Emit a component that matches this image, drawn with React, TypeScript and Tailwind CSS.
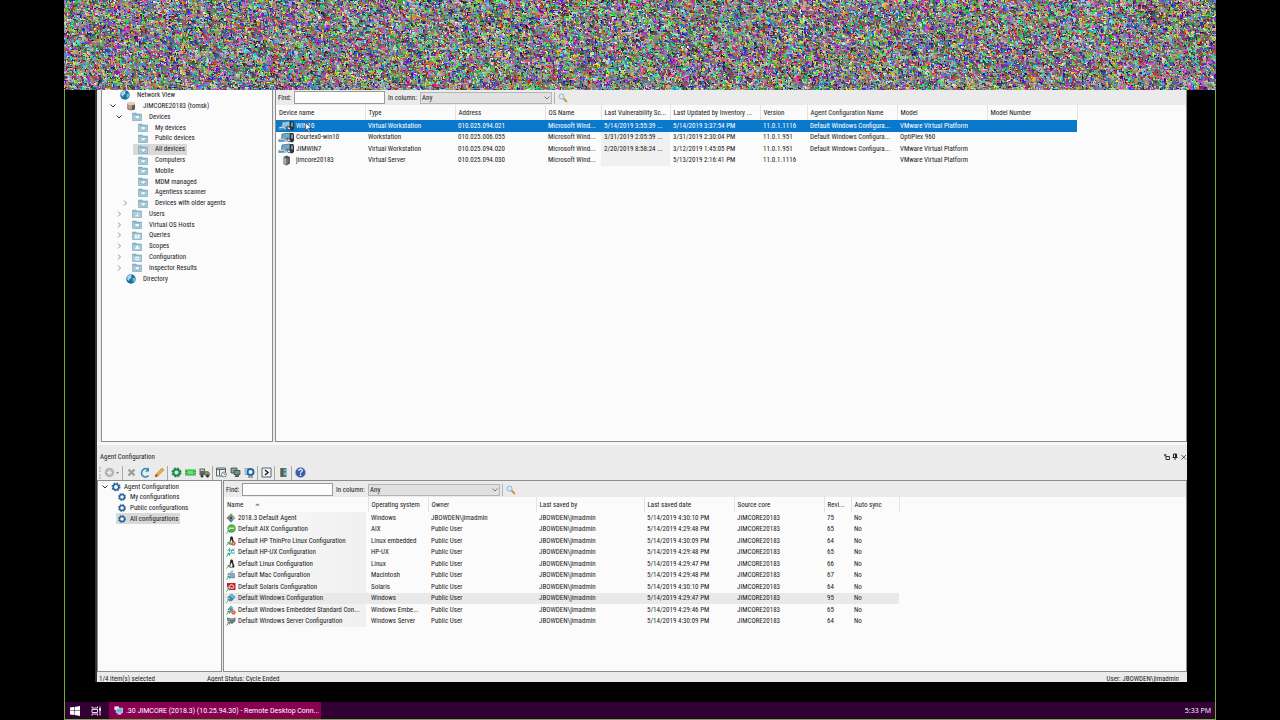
import { useEffect, useRef } from "react";
import type { ReactNode } from "react";

type TreeItem = {
  label: string;
  level: number;
  icon: ReactNode;
  chevron?: "open" | "closed";
  selected?: boolean;
};

function Noise() {
  const ref = useRef<HTMLCanvasElement>(null);
  useEffect(() => {
    const canvas = ref.current;
    const ctx = canvas?.getContext("2d");
    if (!canvas || !ctx) return;
    const image = ctx.createImageData(canvas.width, canvas.height);
    const data = image.data;
    const stride = canvas.width * 4;
    let seed = 90210;
    const next = () => {
      seed = (Math.imul(seed, 1664525) + 1013904223) >>> 0;
      return (seed >>> 8) / 16777216;
    };
    for (let i = 0; i < data.length; i += 4) {
      const pick = next();
      const source = pick < 0.36 && i >= 4 ? i - 4 : pick < 0.66 && i >= stride ? i - stride : -1;
      for (let c = 0; c < 3; c += 1) {
        data[i + c] = source >= 0 ? data[source + c] * 0.85 + next() * 38 : next() * 255;
      }
      data[i + 3] = 255;
    }
    ctx.putImageData(image, 0, 0);
  }, []);
  return <canvas ref={ref} width={1152} height={90} aria-hidden="true" className="block h-[90px] w-full shrink-0" />;
}

function Folder({ mark = "screen" }: { mark?: "screen" | "user" | "grid" | "scope" | "gear" }) {
  return (
    <svg viewBox="0 0 20 18" className="h-[9px] w-[10px] shrink-0">
      <path d="M1 2h7l2 2h9v13H1z" fill="#8fb9c9" stroke="#6f9aac" strokeWidth="1" />
      <path d="M2 6h16v10H2z" fill="#a9cddb" />
      {mark === "screen" && <path d="M6 7h9v6h-3v2H9v-2H6z" fill="#e9f6fb" stroke="#6aa0b8" />}
      {mark === "user" && <path d="M10 6.500a2.200 2.200 0 1 1 0 4.400M6.500 15c0-5 7-5 7 0z" fill="#e9f6fb" />}
      {mark === "grid" && <path d="M6 7h3.500v8H6zM11 7h4v8h-4z" fill="#f4fbff" />}
      {mark === "scope" && <path d="M10.500 6l5 8h-10z" fill="#f4fbff" />}
      {mark === "gear" && <circle cx="10.500" cy="11" r="3" fill="none" stroke="#f4fbff" strokeWidth="2.200" />}
    </svg>
  );
}

function Globe() {
  return (
    <svg viewBox="0 0 20 20" className="h-[10px] w-[10px] shrink-0">
      <circle cx="10" cy="10" r="9.500" fill="#1d6f9f" />
      <path d="M3 5c3-4 7-4 9-3l-2 3 1 3-4 2-1 4-4-4z" fill="#a8d9e6" />
      <path d="M13 8l5-1 1 4-4 6-2-4z" fill="#6db7d0" />
    </svg>
  );
}

function Database() {
  return (
    <svg viewBox="0 0 20 20" className="h-[10px] w-[10px] shrink-0">
      <path d="M2 5v10c0 5 16 5 16 0V5z" fill="#a58c7a" />
      <path d="M12 8h6v7c0 2-3 3-6 3z" fill="#6d5546" />
      <ellipse cx="10" cy="5" rx="8" ry="3.500" fill="#dccfc4" />
      <path d="M2 10c2 3 8 3 10 2" fill="none" stroke="#e3d9d0" />
    </svg>
  );
}

function BlueGear() {
  return (
    <svg viewBox="0 0 20 20" className="h-[10px] w-[10px] shrink-0">
      <circle cx="10" cy="10" r="7.500" fill="none" stroke="#2b659a" strokeWidth="3" strokeDasharray="3.200 2.690" />
      <circle cx="10" cy="10" r="5.500" fill="#f5fafc" stroke="#2b659a" strokeWidth="3.200" />
    </svg>
  );
}

function SmallGear() {
  return (
    <svg viewBox="0 0 24 24" className="h-[10px] w-[10px] shrink-0">
      <circle cx="12" cy="12" r="8" fill="none" stroke="#2b659a" strokeWidth="3" strokeDasharray="3.200 3.080" />
      <circle cx="12" cy="12" r="6" fill="#f5fafc" stroke="#2b659a" strokeWidth="3.600" />
    </svg>
  );
}

function Chevron({ kind }: { kind?: "open" | "closed" }) {
  return (
    <svg viewBox="0 0 12 12" className="h-[6px] w-[6px] shrink-0" aria-hidden="true">
      {kind === "open" && <path d="M1 3l5 5 5-5" fill="none" stroke="#333" strokeWidth="2" />}
      {kind === "closed" && <path d="M4 1l5 5-5 5" fill="none" stroke="#888" strokeWidth="1.800" />}
    </svg>
  );
}

const deviceTree: TreeItem[] = [
  { label: "Network View", level: 0, icon: <Globe /> },
  { label: "JIMCORE20183 (tomsk)", level: 1, icon: <Database />, chevron: "open" },
  { label: "Devices", level: 2, icon: <Folder />, chevron: "open" },
  { label: "My devices", level: 3, icon: <Folder /> },
  { label: "Public devices", level: 3, icon: <Folder /> },
  { label: "All devices", level: 3, icon: <Folder />, selected: true },
  { label: "Computers", level: 3, icon: <Folder /> },
  { label: "Mobile", level: 3, icon: <Folder /> },
  { label: "MDM managed", level: 3, icon: <Folder /> },
  { label: "Agentless scanner", level: 3, icon: <Folder /> },
  { label: "Devices with older agents", level: 3, icon: <Folder />, chevron: "closed" },
  { label: "Users", level: 2, icon: <Folder mark="user" />, chevron: "closed" },
  { label: "Virtual OS Hosts", level: 2, icon: <Folder />, chevron: "closed" },
  { label: "Queries", level: 2, icon: <Folder mark="grid" />, chevron: "closed" },
  { label: "Scopes", level: 2, icon: <Folder mark="scope" />, chevron: "closed" },
  { label: "Configuration", level: 2, icon: <Folder mark="gear" />, chevron: "closed" },
  { label: "Inspector Results", level: 2, icon: <Folder />, chevron: "closed" },
  { label: "Directory", level: 1, icon: <Globe /> },
];

const configTree: TreeItem[] = [
  { label: "Agent Configuration", level: 0, icon: <BlueGear />, chevron: "open" },
  { label: "My configurations", level: 1, icon: <SmallGear /> },
  { label: "Public configurations", level: 1, icon: <SmallGear /> },
  { label: "All configurations", level: 1, icon: <SmallGear />, selected: true },
];

const indents = ["pl-[2px]", "pl-[8px]", "pl-[14px]", "pl-[20px]"];

function Tree({ items, compact, className }: { items: TreeItem[]; compact?: boolean; className: string }) {
  return (
    <ul className={`grid auto-rows-fr ${className}`}>
      {items.map((item) => (
        <li key={item.label} className={`flex min-h-0 items-center ${compact ? "gap-[2px]" : "gap-[5px]"} ${indents[item.level]}`}>
          <Chevron kind={item.chevron} />
          <button
            type="button"
            className={`flex h-full min-h-0 items-center whitespace-nowrap pr-[2px] ${
              compact ? "gap-[3px] pl-px" : "gap-[7px] pl-[5px]"
            } ${item.selected ? "bg-[#d9d9d9]" : ""}`}
          >
            {item.icon}
            {item.label}
          </button>
        </li>
      ))}
    </ul>
  );
}

function Magnifier() {
  return (
    <svg viewBox="0 0 20 20" className="h-[10px] w-[10px]">
      <path d="M11 11l7 7" stroke="#c99a3c" strokeWidth="4" />
      <circle cx="7" cy="7" r="5" fill="#d8edf7" stroke="#8fb4c8" strokeWidth="2" />
    </svg>
  );
}

function FindBar({ id }: { id: string }) {
  return (
    <div className="flex h-[15px] shrink-0 items-center bg-[#ebebeb] pl-[2px]">
      <label htmlFor={`${id}-find`} className="w-[16px] whitespace-nowrap">
        Find:
      </label>
      <input id={`${id}-find`} className="h-[13px] w-[91px] border border-[#9a9a9a] bg-[#fdfdfd] px-1 outline-none" />
      <label htmlFor={`${id}-column`} className="ml-[3px] w-[32px] whitespace-nowrap">
        In column:
      </label>
      <div className="relative">
        <select
          id={`${id}-column`}
          className="block h-[12px] w-[132px] appearance-none border border-[#b4b4b4] bg-[#e1e1e1] pl-px outline-none"
        >
          <option>Any</option>
        </select>
        <svg viewBox="0 0 12 12" className="pointer-events-none absolute top-[3px] right-[2px] h-[6px] w-[6px]">
          <path d="M1 3l5 5 5-5" fill="none" stroke="#555" strokeWidth="1.600" />
        </svg>
      </div>
      <span className="mx-[2px] h-[12px] w-px bg-[#b0b0b0]" />
      <button type="button" aria-label="Search" className="ml-px">
        <Magnifier />
      </button>
    </div>
  );
}

function Pc({ tone = "dark" }: { tone?: "dark" | "light" }) {
  return (
    <svg viewBox="0 0 34 22" className="h-[11px] w-[17px] shrink-0">
      <path d="M8 4l15-2 1 11-17 3z" fill={tone === "light" ? "#8cc4e4" : "#6fa9c6"} stroke="#3f6a82" strokeWidth="1.500" />
      <path d="M1 14l13-1 3 6-16 1z" fill="#5f93ad" />
      <path d="M3 15l9-1 3 4" stroke="#d3e8f1" strokeWidth="2" fill="none" />
      <path d="M24 2h6l2 3v13l-4 3-5-2z" fill="#2c3439" />
      <path d="M28 5v8" stroke="#e5eef2" strokeWidth="2" />
      <path d="M19 12l6 5-2 3-5-3z" fill="#f2f2f2" stroke="#333" strokeWidth="1.500" />
    </svg>
  );
}

function Server() {
  return (
    <svg viewBox="0 0 34 22" className="h-[11px] w-[17px] shrink-0">
      <path d="M11 4l6-3 7 3v13l-7 4-6-3z" fill="#4b575d" />
      <path d="M12 5l5 2v13l-5-3z" fill="#9cabb1" />
      <path d="M19 8v9M22 7v9" stroke="#8d9aa0" />
    </svg>
  );
}

function Cursor() {
  return (
    <svg viewBox="0 0 12 18" className="absolute top-[2px] left-[27px] h-[11px] w-[7px]">
      <path d="M1 1v13l3-3 3 6 2-1-3-6h5z" fill="#fff" stroke="#222" />
    </svg>
  );
}

const deviceHeads = [
  "Device name",
  "Type",
  "Address",
  "OS Name",
  "Last Vulnerability Sc...",
  "Last Updated by Inventory ...",
  "Version",
  "Agent Configuration Name",
  "Model",
  "Model Number",
];

const devices = [
  ["WIN10", "Virtual Workstation", "010.025.094.021", "Microsoft Wind...", "5/14/2019 3:55:39 ...", "5/14/2019 3:37:54 PM", "11.0.1.1116", "Default Windows Configura...", "VMware Virtual Platform", ""],
  ["Courtex0-win10", "Workstation", "010.025.006.055", "Microsoft Wind...", "3/31/2019 2:05:59 ...", "3/31/2019 2:30:04 PM", "11.0.1.951", "Default Windows Configura...", "OptiPlex 960", ""],
  ["JIMWIN7", "Virtual Workstation", "010.025.094.020", "Microsoft Wind...", "2/20/2019 8:58:24 ...", "3/12/2019 1:45:05 PM", "11.0.1.951", "Default Windows Configura...", "VMware Virtual Platform", ""],
  ["jimcore20183", "Virtual Server", "010.025.094.030", "Microsoft Wind...", "", "5/13/2019 2:16:41 PM", "11.0.1.1116", "", "VMware Virtual Platform", ""],
];

function DeviceTable() {
  return (
    <table className="h-[61px] w-[801px] table-fixed border-collapse text-left">
      <colgroup>
        <col className="w-[89px]" />
        <col className="w-[90px]" />
        <col className="w-[90px]" />
        <col className="w-[56px]" />
        <col className="w-[69px]" />
        <col className="w-[90px]" />
        <col className="w-[47px]" />
        <col className="w-[90px]" />
        <col className="w-[90px]" />
        <col className="w-[90px]" />
      </colgroup>
      <thead>
        <tr className="h-[15px]">
          {deviceHeads.map((head) => (
            <th key={head} className="border-r border-[#e3e3e3] pl-[3px] font-normal whitespace-nowrap">
              {head}
            </th>
          ))}
        </tr>
      </thead>
      <tbody>
        {devices.map((row, r) => (
          <tr key={row[0]} className={r === 0 ? "bg-[#0a79cc] text-white" : ""}>
            {row.map((cell, c) => (
              <td key={c} className={`whitespace-nowrap ${c === 0 ? "pl-[2px]" : "pl-[3px]"} ${c === 4 && r > 0 ? "bg-[#f0f0f0]" : ""}`}>
                {c === 0 ? (
                  <span className="relative flex items-center gap-px">
                    {r === 3 ? <Server /> : <Pc tone={r === 0 ? "light" : "dark"} />}
                    {cell}
                    {r === 0 && <Cursor />}
                  </span>
                ) : (
                  cell
                )}
              </td>
            ))}
          </tr>
        ))}
      </tbody>
    </table>
  );
}

function ConfigIcon({ kind }: { kind: string }) {
  return (
    <svg viewBox="0 0 20 20" className="h-[10px] w-[10px] shrink-0">
      {kind === "agent" && (
        <>
          <path d="M10 1l9 9-9 9-9-9z" fill="#8fa9a7" />
          <path d="M10 1l5 6H5z" fill="#4fae6c" />
          <path d="M1 10l6-5v10z" fill="#c7626c" />
          <path d="M10 19l5-6H5z" fill="#4a7bb0" />
          <circle cx="10" cy="10" r="2.500" fill="#2d4f55" />
        </>
      )}
      {kind === "aix" && (
        <>
          <circle cx="11" cy="9" r="8.500" fill="#58ad45" />
          <path d="M6 7h10v3H6z" fill="#c8ecbc" />
        </>
      )}
      {(kind === "linux" || kind === "thinpro") && (
        <>
          <path d="M11 1c4 0 3 5 4 8s3 6 1 8H6c-2-2 1-6 2-9s-1-7 3-7z" fill="#26292b" />
          <path d="M11 7c2 3 3 7 1 9H9c-1-3 0-6 2-9z" fill="#f2f2f2" />
        </>
      )}
      {kind === "hpux" && <path d="M3 8l4-5v7m0-4h4v5M12 8l5-5M12 3l5 6M4 12h14" stroke="#42afb4" strokeWidth="2" fill="none" />}
      {kind === "mac" && (
        <>
          <path d="M4 7h13v9H4z" fill="#8aa9bf" stroke="#577791" />
          <path d="M8 6c0-4 4-5 7-5l-1 4z" fill="#9fb8c9" />
        </>
      )}
      {kind === "solaris" && (
        <>
          <path d="M2 2h17v14H2z" fill="#c91f2b" />
          <path d="M6 10c1-6 9-6 10 0M6 12h10" stroke="#fff" strokeWidth="1.800" fill="none" />
        </>
      )}
      {kind === "windows" && (
        <>
          <path d="M11 1l8 7-8 9-9-7z" fill="#3d85ab" />
          <path d="M11 2l7 6-4 3-7-5z" fill="#79b5cf" />
        </>
      )}
      {kind === "embedded" && (
        <>
          <path d="M10 1l5 8-7 7-5-7z" fill="#5c97a8" />
          <path d="M7 5l5-3 3 5z" fill="#7cc47c" />
        </>
      )}
      {kind === "server" && (
        <>
          <path d="M2 3l10 2 7-2v7l-7 6-9-5z" fill="#6d7579" />
          <path d="M5 6l6 2 6-2" stroke="#c9d2d5" fill="none" />
        </>
      )}
      {(kind === "thinpro" || kind === "embedded") && <circle cx="15" cy="15" r="3.500" fill="#d9a25a" stroke="#d8442d" strokeWidth="2" />}
      {kind !== "agent" && (
        <>
          <path d="M0 11h8v9H0z" fill="#f3fff5" />
          <path d="M1 19l5-6M3 13h4v4" stroke="#2d8b57" strokeWidth="1.800" fill="none" />
        </>
      )}
    </svg>
  );
}

const configHeads = ["Name", "Operating system", "Owner", "Last saved by", "Last saved date", "Source core", "Revi...", "Auto sync"];

const configs = [
  ["agent", "2018.3 Default Agent", "Windows", "JBOWDEN\\jimadmin", "5/14/2019 4:30:10 PM", "75"],
  ["aix", "Default AIX Configuration", "AIX", "Public User", "5/14/2019 4:29:48 PM", "65"],
  ["thinpro", "Default HP ThinPro Linux Configuration", "Linux embedded", "Public User", "5/14/2019 4:30:09 PM", "64"],
  ["hpux", "Default HP-UX Configuration", "HP-UX", "Public User", "5/14/2019 4:29:48 PM", "65"],
  ["linux", "Default Linux Configuration", "Linux", "Public User", "5/14/2019 4:29:47 PM", "66"],
  ["mac", "Default Mac Configuration", "Macintosh", "Public User", "5/14/2019 4:29:48 PM", "67"],
  ["solaris", "Default Solaris Configuration", "Solaris", "Public User", "5/14/2019 4:30:10 PM", "64"],
  ["windows", "Default Windows Configuration", "Windows", "Public User", "5/14/2019 4:29:47 PM", "95"],
  ["embedded", "Default Windows Embedded Standard Con...", "Windows Embe...", "Public User", "5/14/2019 4:29:46 PM", "65"],
  ["server", "Default Windows Server Configuration", "Windows Server", "Public User", "5/14/2019 4:30:09 PM", "64"],
];

function ConfigTable() {
  return (
    <table className="h-[130px] w-[675px] table-fixed border-collapse text-left">
      <colgroup>
        <col className="w-[144px]" />
        <col className="w-[60px]" />
        <col className="w-[108px]" />
        <col className="w-[108px]" />
        <col className="w-[90px]" />
        <col className="w-[90px]" />
        <col className="w-[27px]" />
        <col className="w-[48px]" />
      </colgroup>
      <thead>
        <tr className="h-[15px]">
          {configHeads.map((head, i) => (
            <th key={head} className="border-r border-[#e3e3e3] pl-[3px] font-normal whitespace-nowrap">
              {head}
              {i === 0 && (
                <svg viewBox="0 0 10 6" className="ml-[12px] inline h-[3px] w-[5px]">
                  <path d="M0 5l5-4 5 4z" fill="#777" />
                </svg>
              )}
            </th>
          ))}
        </tr>
      </thead>
      <tbody>
        {configs.map(([kind, name, os, owner, date, revision]) => (
          <tr key={name} className={kind === "windows" ? "bg-[#e9e9e9]" : ""}>
            <td className="h-px py-0 pl-[2px] whitespace-nowrap">
              <span className="flex h-full items-center gap-[2px]">
                <ConfigIcon kind={kind} />
                <span
                  className={`mr-[2px] flex h-full flex-1 items-center ${
                    kind === "windows" ? "" : "bg-linear-to-r from-[#fafafa] to-[#f0f0f0]"
                  }`}
                >
                  {name}
                </span>
              </span>
            </td>
            {[os, owner, "JBOWDEN\\jimadmin", date, "JIMCORE20183", revision, "No"].map((cell, i) => (
              <td key={i} className="pl-[3px] whitespace-nowrap">
                {cell}
              </td>
            ))}
          </tr>
        ))}
      </tbody>
    </table>
  );
}

function Tool({ label, children }: { label: string; children: ReactNode }) {
  return (
    <button type="button" aria-label={label} className="flex h-[14px] w-[14px] items-center justify-center">
      <svg viewBox="0 0 22 22" className="h-[11px] w-[11px]">
        {children}
      </svg>
    </button>
  );
}

function Divider() {
  return <span className="mx-px h-[14px] w-px bg-[#a8a8a8]" />;
}

function Toolbar() {
  return (
    <div className="flex h-[15px] shrink-0 items-center">
      <span className="mr-px ml-[2px] h-[12px] border-l-2 border-dotted border-[#c4c4c4]" />
      <Tool label="New">
        <circle cx="11" cy="11" r="9.500" fill="#b5b5b5" />
        <path d="M11 6v10M6 11h10" stroke="#ededed" strokeWidth="3" />
      </Tool>
      <svg viewBox="0 0 8 5" className="mr-[2px] h-[2px] w-[3px]">
        <path d="M0 0h8l-4 5z" fill="#888" />
      </svg>
      <Divider />
      <Tool label="Delete">
        <path d="M5 5l12 12M17 5L5 17" stroke="#9a9a9a" strokeWidth="4.500" />
      </Tool>
      <Tool label="Refresh">
        <path d="M17 5C11 0 3 5 3 12c0 8 10 10 14 5" fill="none" stroke="#2f87bd" strokeWidth="3" />
        <path d="M18 1v8h-8z" fill="#2f87bd" />
      </Tool>
      <Tool label="Edit">
        <path d="M2 20l2-6L16 2l4 4L8 18z" fill="#ecaa45" stroke="#bb7b22" />
        <path d="M2 20l2-6 4 4z" fill="#6d5436" />
      </Tool>
      <Divider />
      <Tool label="Agent settings">
        <circle cx="11" cy="11" r="8" fill="none" stroke="#278b58" strokeWidth="4" strokeDasharray="4 2.280" />
        <circle cx="11" cy="11" r="6" fill="#c9f2d6" stroke="#278b58" strokeWidth="4" />
      </Tool>
      <Tool label="Deploy">
        <path d="M0 5h22v12H0z" fill="#2e9b3f" />
        <path d="M5 7h12v8H5z" fill="#61e86c" />
        <path d="M2 6v10M20 6v10" stroke="#d6f5d8" strokeWidth="2" strokeDasharray="2 2" />
      </Tool>
      <Tool label="Distribute">
        <path d="M1 3h11v13H1z" fill="#5e655c" />
        <path d="M3 5h7v3H3z" fill="#c5cdba" />
        <path d="M12 8h6l4 4v6H12z" fill="#8b8c5c" />
        <circle cx="6" cy="18" r="3" fill="#333" />
        <circle cx="17" cy="18" r="3" fill="#333" />
      </Tool>
      <Divider />
      <Tool label="Schedule">
        <path d="M1 2h18v16H1z" fill="#eef2ee" stroke="#536565" strokeWidth="2" />
        <path d="M1 5h18M7 5v12" stroke="#536565" strokeWidth="2" />
        <circle cx="16" cy="15" r="5" fill="#f4f4f4" stroke="#536565" strokeWidth="1.500" />
        <path d="M16 12v3h3" stroke="#333" fill="none" />
      </Tool>
      <Tool label="Copy">
        <path d="M2 2h12v10H2z" fill="#92a79c" stroke="#435" strokeWidth="1.500" />
        <path d="M8 7h12v8H8z" fill="#629c83" stroke="#344" strokeWidth="1.500" />
        <path d="M11 16h7v4h-9z" fill="#4e5f58" />
      </Tool>
      <Tool label="Configure">
        <path d="M2 3h10v12H2z" fill="#d8e8f3" stroke="#6f8fa8" strokeWidth="1.500" />
        <circle cx="13" cy="10" r="6" fill="#e9f4fb" stroke="#2468a3" strokeWidth="4" />
        <path d="M8 20h10" stroke="#426079" strokeWidth="2" />
      </Tool>
      <Divider />
      <Tool label="Run">
        <path d="M2 2h18v18H2z" fill="#f4f6f8" stroke="#536271" strokeWidth="2" />
        <path d="M8 6l6 5-6 5" fill="none" stroke="#222" strokeWidth="3" />
      </Tool>
      <Divider />
      <Tool label="Log">
        <path d="M5 2h12v18H5z" fill="#3b7f97" />
        <path d="M5 2h5v18H5z" fill="#725b32" />
        <path d="M12 5h4v3h-4zM12 11h4v5h-4z" fill="#82c0cb" />
      </Tool>
      <Divider />
      <Tool label="Help">
        <circle cx="11" cy="11" r="10" fill="#3c5cad" stroke="#8fa1cc" />
        <path d="M7.500 8c0-5 7-5 7-1 0 3-3.500 2.500-3.500 6M11 15v3" stroke="#fff" strokeWidth="2.400" fill="none" />
      </Tool>
    </div>
  );
}

export default function App() {
  return (
    <div className="min-h-screen bg-black font-['Roboto_Condensed',Lato,'Liberation_Sans',sans-serif] text-[7px] leading-[10px] text-[#222]">
      <div className="mx-auto flex min-h-screen w-[90%] flex-col">
        <Noise />
        <div className="flex flex-1 flex-col border-x border-b border-[#6fae3d]">
          <main className="mr-7 mb-5 ml-[30px] flex flex-1 flex-col border-l-2 border-[#333] bg-[#ebebeb]">
            <section className="flex flex-[354_1_0px] gap-[2px] border-b-[3px] border-[#f7f7f7] pl-1">
              <nav aria-label="Devices" className="w-[172px] shrink-0 border-x border-b border-[#8d8d8d] bg-[#fbfbfb]">
                <Tree items={deviceTree} className="h-[194px]" />
              </nav>
              <div className="min-w-0 flex-1 border-x border-b border-[#8d8d8d] bg-[#fbfbfb]">
                <FindBar id="devices" />
                <DeviceTable />
              </div>
            </section>
            <section className="flex flex-[238_1_0px] flex-col">
              <header className="flex h-[20px] shrink-0 items-center justify-between pt-[3px] pl-[3px]">
                <h2>Agent Configuration</h2>
                <div className="flex items-center">
                  <button type="button" aria-label="Restore">
                    <svg viewBox="0 0 16 16" className="h-[8px] w-[8px]">
                      <path d="M2 4h5M4 2v5M6 7h7v6H6z" fill="none" stroke="#333" strokeWidth="2" />
                    </svg>
                  </button>
                  <button type="button" aria-label="Pin">
                    <svg viewBox="0 0 16 16" className="h-[8px] w-[8px]">
                      <path d="M5 2h6v7H5zM3 9h10M8 9v5" fill="none" stroke="#222" strokeWidth="2" />
                      <path d="M8 2h3v7H8z" fill="#222" />
                    </svg>
                  </button>
                  <button type="button" aria-label="Close">
                    <svg viewBox="0 0 16 16" className="h-[8px] w-[8px]">
                      <path d="M5 4l9 9M14 4l-9 9" stroke="#444" strokeWidth="1.800" />
                    </svg>
                  </button>
                </div>
              </header>
              <Toolbar />
              <div className="flex flex-1 gap-px">
                <nav aria-label="Configurations" className="w-[125px] shrink-0 border border-[#8d8d8d] bg-[#fbfbfb] pl-[2px]">
                  <Tree items={configTree} compact className="h-[43px]" />
                </nav>
                <div className="min-w-0 flex-1 border border-[#8d8d8d] bg-[#fbfbfb]">
                  <div className="bg-[#ebebeb] pt-px">
                    <FindBar id="configs" />
                  </div>
                  <ConfigTable />
                </div>
              </div>
              <footer className="flex h-[10px] shrink-0 overflow-hidden pt-[2px] pr-2 pl-[2px]">
                <span className="w-[108px]">1/4 item(s) selected</span>
                <span className="flex-1">Agent Status: Cycle Ended</span>
                <span>User: JBOWDEN\jimadmin</span>
              </footer>
            </section>
          </main>
          <footer className="flex h-[17px] shrink-0 items-center bg-[#330035] pr-1 font-['Open_Sans',sans-serif] text-[7px] text-white">
            <button type="button" aria-label="Start" className="ml-[5px]">
              <svg viewBox="0 0 20 20" className="h-[10px] w-[10px]">
                <path d="M0 3l8-1v7H0zM9 2l11-2v9H9zM0 10h8v8l-8-1zM9 10h11v10L9 18z" fill="#fff" />
              </svg>
            </button>
            <button type="button" aria-label="Task view" className="ml-[11px]">
              <svg viewBox="0 0 22 20" className="h-[10px] w-[11px]">
                <path d="M2 1v3h11V1M2 19v-3h11v3M2 7h11v6H2zM18 1v18" fill="none" stroke="#e8dfe8" strokeWidth="2" />
                <path d="M16 5h4v4h-4z" fill="#fff" />
              </svg>
            </button>
            <button type="button" className="ml-[7px] flex h-full w-[212px] items-center gap-[3px] bg-[#870052] pl-[5px] font-['Roboto',sans-serif] whitespace-nowrap">
              <svg viewBox="0 0 20 20" className="h-[9px] w-[9px] shrink-0">
                <path d="M1 1h10v8H1z" fill="#e4f2fa" />
                <path d="M5 5h14v10H5z" fill="#66b6e0" stroke="#e4f2fa" strokeWidth="1.500" />
                <path d="M8 16h8v3H8z" fill="#d7e8f2" />
              </svg>
              .30 JIMCORE (2018.3) (10.25.94.30) - Remote Desktop Conn...
            </button>
            <time className="ml-auto">5:33 PM</time>
          </footer>
        </div>
      </div>
    </div>
  );
}
